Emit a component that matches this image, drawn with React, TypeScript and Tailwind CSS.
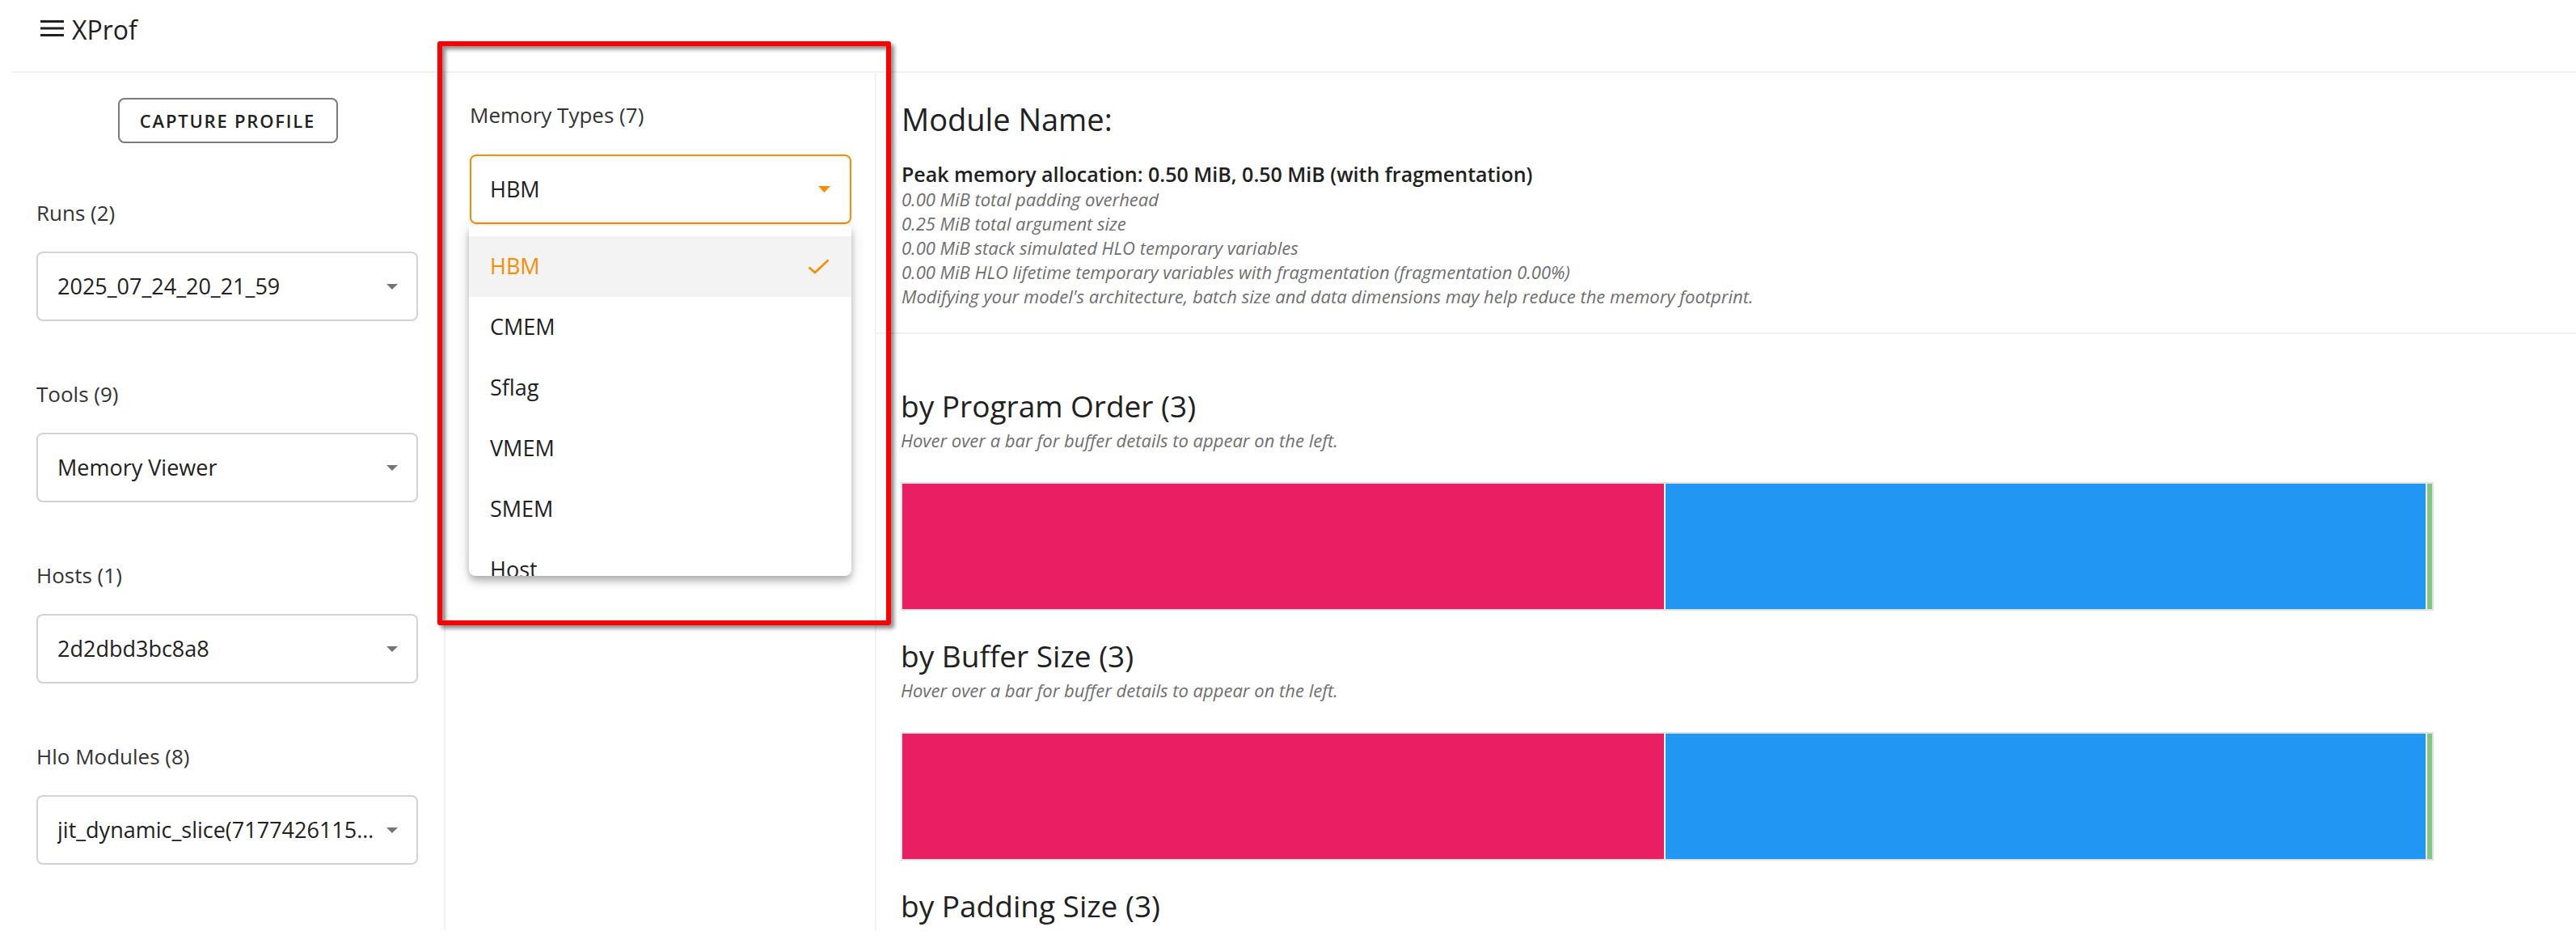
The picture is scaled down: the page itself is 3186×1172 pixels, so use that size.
import React from 'react';

const sidebarSections = [
  { label: 'Runs (2)', value: '2025_07_24_20_21_59' },
  { label: 'Tools (9)', value: 'Memory Viewer' },
  { label: 'Hosts (1)', value: '2d2dbd3bc8a8' },
  { label: 'Hlo Modules (8)', value: 'jit_dynamic_slice(71774261156223451)' },
];

const memoryTypes = ['HBM', 'CMEM', 'Sflag', 'VMEM', 'SMEM', 'Host', 'Unknown'];

const summaryLines = [
  '0.00 MiB total padding overhead',
  '0.25 MiB total argument size',
  '0.00 MiB stack simulated HLO temporary variables',
  '0.00 MiB HLO lifetime temporary variables with fragmentation (fragmentation 0.00%)',
  "Modifying your model's architecture, batch size and data dimensions may help reduce the memory footprint.",
];

function Caret({ color = '#757575' }: { color?: string }) {
  return (
    <svg width="14" height="7" viewBox="0 0 14 7" className="shrink-0">
      <polygon points="0,0 14,0 7,7" fill={color} />
    </svg>
  );
}

function SelectBox({ value }: { value: string }) {
  return (
    <div className="mt-[30px] flex h-[86px] w-[472px] items-center rounded-[8px] border-2 border-[#d2d2d2] pl-[24px] pr-[23px]">
      <span className="min-w-0 flex-1 truncate text-[27px] leading-[40px] text-[#212121]">{value}</span>
      <span className="ml-[2px] flex items-center">
        <Caret />
      </span>
    </div>
  );
}

function BarChart() {
  return (
    <div className="mt-[37px] flex h-[159px] w-[1896px] gap-[2px] border-2 border-[#e3e3e3] bg-white">
      <div className="w-[942px] bg-[#e91e63]" />
      <div className="w-[940px] bg-[#2196f3]" />
      <div className="w-[6px] bg-[#81c784]" />
    </div>
  );
}

function ChartSection({ title, first, hint = true }: { title: string; first?: boolean; hint?: boolean }) {
  return (
    <div className={first ? 'mt-[64px]' : 'mt-[31px]'}>
      <h2 className="text-[37px] leading-[50px] text-[#212121]">{title}</h2>
      {hint && (
        <p className="mt-[2px] text-[22px] italic leading-[30px] text-[#6e6e6e]">
          Hover over a bar for buffer details to appear on the left.
        </p>
      )}
    </div>
  );
}

export default function App() {
  return (
    <div className="relative h-[1172px] w-[3186px] overflow-hidden bg-white font-['Open_Sans',sans-serif]">
      {/* toolbar */}
      <div className="flex h-[88px] items-start pl-[50px] pt-[16px]">
        <svg width="29" height="20" viewBox="0 0 29 20" className="mt-[9px]">
          <rect x="0" y="0" width="29" height="3" fill="#212121" />
          <rect x="0" y="8.5" width="29" height="3" fill="#212121" />
          <rect x="0" y="17" width="29" height="3" fill="#212121" />
        </svg>
        <span className="ml-[10px] text-[32px] leading-[42px] text-[#212121]">XProf</span>
      </div>
      <div className="ml-[14px] h-[2px] bg-[#f1f1f1]" />

      <div className="ml-[14px] flex h-[1060px] overflow-hidden">
        {/* sidebar */}
        <div className="w-[537px] shrink-0 border-r-2 border-[#f1f1f1] pl-[31px] pt-[31px]">
          <div className="flex justify-center pr-[31px]">
            <button className="h-[56px] w-[272px] rounded-[8px] border-2 border-[#7a7a7a] text-[22px] font-semibold tracking-[1.8px] text-[#212121]">
              CAPTURE PROFILE
            </button>
          </div>
          <div className="mt-[68px] flex flex-col gap-[72px]">
            {sidebarSections.map((s) => (
              <div key={s.label}>
                <p className="text-[26px] leading-[36px] text-[#333333]">{s.label}</p>
                <SelectBox value={s.value} />
              </div>
            ))}
          </div>
        </div>

        {/* memory type column */}
        <div className="w-[533px] shrink-0 border-r-2 border-[#f1f1f1] pl-[30px] pt-[34px]">
          <p className="text-[26px] leading-[36px] text-[#333333]">Memory Types (7)</p>
          <div className="relative mt-[31px] w-[472px]">
            <div className="flex h-[86px] items-center rounded-[8px] border-2 border-[#fb8c00] pl-[23px] pr-[24px]">
              <span className="flex-1 text-[27px] text-[#212121]">HBM</span>
              <svg width="15" height="8" viewBox="0 0 15 8">
                <polygon points="0,0 15,0 7.5,8" fill="#fb8c00" />
              </svg>
            </div>
            <div className="absolute left-[-1px] top-[88px] z-10 h-[433px] w-[473px] overflow-hidden rounded-b-[8px] bg-white pt-[13px] shadow-[0_4px_8px_-2px_rgba(0,0,0,0.2),0_8px_10px_0_rgba(0,0,0,0.14),0_2px_20px_0_rgba(0,0,0,0.12)]">
              {memoryTypes.map((m, i) => (
                <div
                  key={m}
                  className={
                    i === 0
                      ? 'flex h-[75px] items-center bg-[#f3f3f3] pl-[26px] pr-[27px] text-[27px] text-[#fb8c00]'
                      : 'flex h-[75px] items-center pl-[26px] pr-[27px] text-[27px] text-[#212121]'
                  }
                >
                  <span className="flex-1">{m}</span>
                  {i === 0 && (
                    <svg width="27" height="19" viewBox="0 0 27 19" fill="none">
                      <path d="M1.5 10.5 L9 17 L25.5 1.5" stroke="#fb8c00" strokeWidth="2.6" />
                    </svg>
                  )}
                </div>
              ))}
            </div>
          </div>
        </div>

        {/* main content */}
        <div className="min-w-0 flex-1">
          <div className="pb-[30px] pl-[31px] pt-[33px]">
            <h1 className="text-[38px] leading-[48px] text-[#212121]">Module Name:</h1>
            <p className="mt-[28px] text-[25px] font-semibold leading-[32px] text-[#212121]">
              Peak memory allocation: 0.50 MiB, 0.50 MiB (with fragmentation)
            </p>
            {summaryLines.map((line) => (
              <p key={line} className="text-[22px] italic leading-[30px] text-[#6e6e6e]">
                {line}
              </p>
            ))}
          </div>
          <div className="h-[2px] bg-[#f1f1f1]" />
          <div className="pl-[30px]">
            <ChartSection title="by Program Order (3)" first />
            <BarChart />
            <ChartSection title="by Buffer Size (3)" />
            <BarChart />
            <ChartSection title="by Padding Size (3)" hint={false} />
          </div>
        </div>
      </div>

      {/* annotation frame */}
      <div className="pointer-events-none absolute left-[541px] top-[51px] z-20 h-[722px] w-[561px] rounded-[3px] border-[6px] border-[#ff0000] shadow-[4px_4px_5px_rgba(0,0,0,0.45),inset_4px_4px_5px_rgba(0,0,0,0.45)]" />
    </div>
  );
}
